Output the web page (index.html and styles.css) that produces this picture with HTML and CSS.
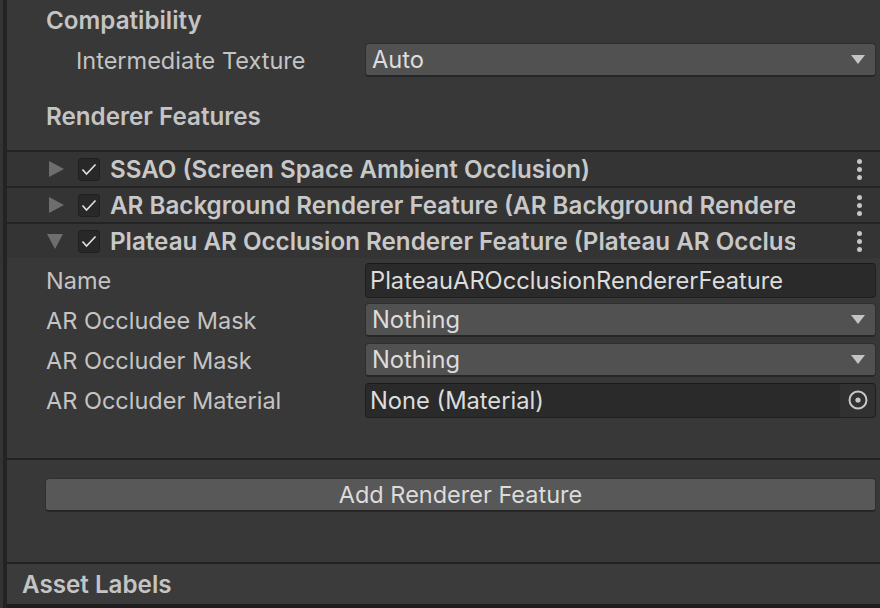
FILE: index.html
```html
<!DOCTYPE html>
<html>
<head>
<meta charset="utf-8">
<link rel="stylesheet" href="styles.css">
</head>
<body>
<div class="frame">
  <div class="gutter"></div>
  <div class="panel">
    <div class="section-title first">Compatibility</div>
    <div class="prop indent">
      <div class="label">Intermediate Texture</div>
      <div class="dropdown"><span class="value">Auto</span><span class="arrow"></span></div>
    </div>
    <div class="section-title second">Renderer Features</div>

    <div class="feature-header">
      <span class="fold right"></span>
      <span class="check"><svg viewBox="0 0 22 23" width="22" height="23"><polyline points="4.5,11.5 8.5,16 17.5,6.5" fill="none" stroke="#e2e2e2" stroke-width="1.6"/></svg></span>
      <span class="feature-title">SSAO (Screen Space Ambient Occlusion)</span>
      <span class="kebab"><i></i><i></i><i></i></span>
    </div>
    <div class="feature-header">
      <span class="fold right"></span>
      <span class="check"><svg viewBox="0 0 22 23" width="22" height="23"><polyline points="4.5,11.5 8.5,16 17.5,6.5" fill="none" stroke="#e2e2e2" stroke-width="1.6"/></svg></span>
      <span class="feature-title">AR Background Renderer Feature (AR Background Renderer Feature)</span>
      <span class="kebab"><i></i><i></i><i></i></span>
    </div>
    <div class="feature-header">
      <span class="fold down"></span>
      <span class="check"><svg viewBox="0 0 22 23" width="22" height="23"><polyline points="4.5,11.5 8.5,16 17.5,6.5" fill="none" stroke="#e2e2e2" stroke-width="1.6"/></svg></span>
      <span class="feature-title">Plateau AR Occlusion Renderer Feature (Plateau AR Occlusion Renderer Feature)</span>
      <span class="kebab"><i></i><i></i><i></i></span>
    </div>

    <div class="feature-body">
      <div class="prop">
        <div class="label">Name</div>
        <div class="textfield"><span class="value">PlateauAROcclusionRendererFeature</span></div>
      </div>
      <div class="prop">
        <div class="label">AR Occludee Mask</div>
        <div class="dropdown"><span class="value">Nothing</span><span class="arrow"></span></div>
      </div>
      <div class="prop">
        <div class="label">AR Occluder Mask</div>
        <div class="dropdown"><span class="value">Nothing</span><span class="arrow"></span></div>
      </div>
      <div class="prop">
        <div class="label">AR Occluder Material</div>
        <div class="objectfield">
          <span class="value">None (Material)</span>
          <span class="picker"><svg viewBox="0 0 22 22" width="22" height="22"><circle cx="11" cy="11" r="8.5" fill="none" stroke="#c8c8c8" stroke-width="2"/><circle cx="11" cy="11" r="2.6" fill="#c8c8c8"/></svg></span>
        </div>
      </div>
    </div>

    <div class="add-area">
      <div class="add-button">Add Renderer Feature</div>
    </div>

    <div class="asset-labels">Asset Labels</div>
  </div>
</div>
</body>
</html>
```

FILE: styles.css
```css
html, body {
  margin: 0;
  padding: 0;
  background: #383838;
  width: 880px;
  height: 608px;
  overflow: hidden;
}
body {
  font-family: Inter, "Noto Sans", sans-serif;
  color: #c4c4c4;
}
.frame {
  display: flex;
  height: 608px;
}
.gutter {
  width: 3px;
  background: #333333;
  flex: none;
}
.panel {
  flex: 1;
  border-left: 4px solid #232323;
  display: flex;
  flex-direction: column;
  min-width: 0;
  background: #383838;
}
.section-title {
  font-weight: 600;
  font-size: 24.2px;
  color: #c4c4c4;
  padding-left: 39px;
  display: flex;
  align-items: center;
  box-sizing: border-box;
}
.section-title.first {
  height: 40px;
  padding-top: 1px;
}
.section-title.second {
  height: 70px;
  padding-top: 2px;
}
.prop {
  height: 40px;
  display: flex;
  align-items: center;
  padding-left: 39px;
  padding-right: 4px;
}
.prop.indent .label {
  padding-left: 30px;
  width: 289px;
}
.label {
  width: 319px;
  flex: none;
  font-size: 23.5px;
  color: #c4c4c4;
  white-space: nowrap;
}
.value {
  font-size: 23.7px;
  color: #dcdcdc;
  white-space: nowrap;
}
.dropdown, .textfield, .objectfield {
  flex: 1;
  height: 34px;
  box-sizing: border-box;
  border-radius: 4px;
  display: flex;
  align-items: center;
  padding-left: 6px;
  min-width: 0;
}
.dropdown {
  background: #515151;
  border: 1px solid #2e2e2e;
  border-bottom: 2px solid #262626;
  padding-right: 10px;
  justify-content: space-between;
}
.arrow {
  width: 0;
  height: 0;
  border-left: 7px solid transparent;
  border-right: 7px solid transparent;
  border-top: 9px solid #c4c4c4;
}
.textfield {
  background: #2a2a2a;
  border: 1px solid #1f1f1f;
  border-top-color: #191919;
  padding-left: 4px;
  height: 35px;
}
.objectfield {
  background: #2a2a2a;
  border: 1px solid #1f1f1f;
  border-top-color: #191919;
  padding-left: 4px;
  padding-right: 0;
  height: 35px;
  justify-content: space-between;
  overflow: hidden;
}
.picker {
  width: 35px;
  height: 100%;
  background: #313131;
  display: flex;
  align-items: center;
  justify-content: center;
}
.feature-header {
  height: 34px;
  border-top: 2px solid #232323;
  background: #343434;
  display: flex;
  align-items: center;
  padding-left: 42px;
  padding-right: 0;
}
.fold {
  width: 17px;
  height: 17px;
  flex: none;
  position: relative;
}
.fold.right::before {
  content: "";
  position: absolute;
  left: 0;
  top: 0;
  border-top: 8.5px solid transparent;
  border-bottom: 8.5px solid transparent;
  border-left: 15px solid #6e6e6e;
}
.fold.down::before {
  content: "";
  position: absolute;
  left: -2px;
  top: 1px;
  border-left: 8.5px solid transparent;
  border-right: 8.5px solid transparent;
  border-top: 15px solid #6e6e6e;
}
.check {
  width: 22px;
  height: 23px;
  box-sizing: border-box;
  background: #282828;
  border: 1px solid #202020;
  border-radius: 3px;
  margin-left: 12px;
  flex: none;
  display: flex;
  align-items: center;
  justify-content: center;
}
.check svg {
  display: block;
  flex: none;
}
.feature-title {
  font-weight: 600;
  font-size: 24.2px;
  color: #c8c8c8;
  margin-left: 10px;
  width: 685px;
  flex: none;
  overflow: hidden;
  white-space: nowrap;
}
.kebab {
  flex: 1;
  display: flex;
  flex-direction: column;
  align-items: center;
  gap: 3px;
  padding-left: 44px;
}
.kebab i {
  display: block;
  width: 5px;
  height: 5px;
  border-radius: 50%;
  background: #c4c4c4;
}
.feature-body {
  height: 200px;
  padding-top: 2px;
  box-sizing: border-box;
}
.add-area {
  border-top: 2px solid #232323;
  padding: 18px 4px 0 38px;
  box-sizing: border-box;
  height: 104px;
}
.add-button {
  height: 34px;
  box-sizing: border-box;
  background: #585858;
  border: 1px solid #2f2f2f;
  border-bottom: 2px solid #262626;
  border-radius: 4px;
  display: flex;
  align-items: center;
  justify-content: center;
  font-size: 23.5px;
  color: #dcdcdc;
}
.asset-labels {
  border-top: 2px solid #232323;
  border-bottom: 4px solid #1e1e1e;
  height: 40px;
  background: #3b3b3b;
  font-weight: 600;
  font-size: 24.2px;
  color: #c4c4c4;
  padding-left: 15px;
  display: flex;
  align-items: center;
}
```
